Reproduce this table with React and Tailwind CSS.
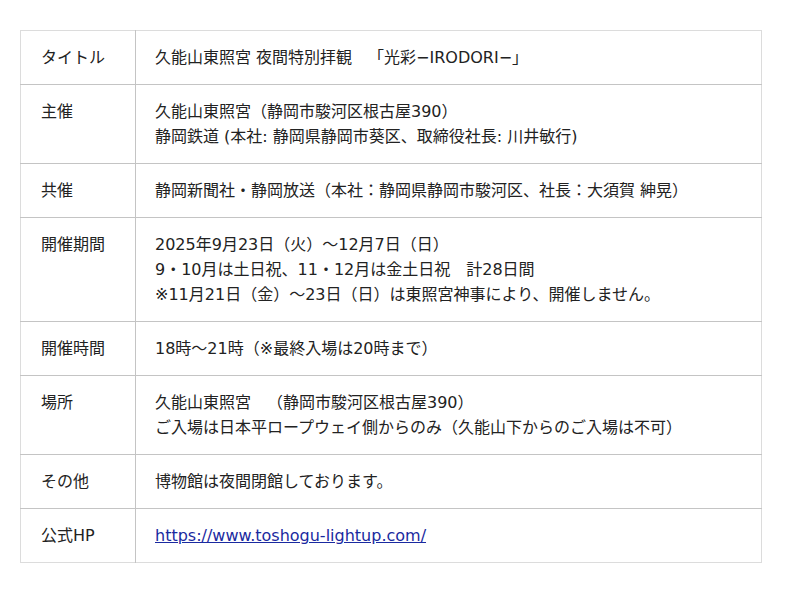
const rows = [
  { label: 'タイトル', lines: ['久能山東照宮 夜間特別拝観\u2002　「光彩−IRODORI−」'] },
  { label: '主催', lines: ['久能山東照宮（静岡市駿河区根古屋390）', '静岡鉄道 (本社: 静岡県静岡市葵区、取締役社長: 川井敏行)'] },
  { label: '共催', lines: ['静岡新聞社・静岡放送（本社：静岡県静岡市駿河区、社長：大須賀 紳晃）'] },
  {
    label: '開催期間',
    lines: [
      '2025年9月23日（火）〜12月7日（日）',
      '9・10月は土日祝、11・12月は金土日祝　計28日間',
      '※11月21日（金）〜23日（日）は東照宮神事により、開催しません。',
    ],
  },
  { label: '開催時間', lines: ['18時〜21時（※最終入場は20時まで）'] },
  { label: '場所', lines: ['久能山東照宮\u2002　（静岡市駿河区根古屋390）', 'ご入場は日本平ロープウェイ側からのみ（久能山下からのご入場は不可）'] },
  { label: 'その他', lines: ['博物館は夜間閉館しております。'] },
];

export default function App() {
  return (
    <div
      className="bg-white w-[800px] h-[593px] pt-[30px] pl-[20px] text-[#222] text-[16px] leading-[25px]"
      style={{ fontFamily: '"DejaVu Sans", "Noto Sans CJK JP", sans-serif' }}
    >
      <table className="w-[742px] border-collapse border border-[#dcdcdc]">
        <tbody>
          {rows.map(row => (
            <tr key={row.label} className="border-b border-[#c4c4c4]">
              <td className="w-[115px] align-top pl-[20px] py-[14px] border-r border-[#c4c4c4]">
                {row.label}
              </td>
              <td className="align-top pl-[19px] py-[14px]">
                {row.lines.map((l, i) => (
                  <div key={i}>{l}</div>
                ))}
              </td>
            </tr>
          ))}
          <tr className="border-b border-[#dcdcdc]">
            <td className="w-[115px] align-top pl-[20px] py-[14px] border-r border-[#c4c4c4]">
              公式HP
            </td>
            <td className="align-top pl-[19px] py-[14px]">
              <a href="#" className="text-[#1a2aa0] underline">https://www.toshogu-lightup.com/</a>
            </td>
          </tr>
        </tbody>
      </table>
    </div>
  );
}
